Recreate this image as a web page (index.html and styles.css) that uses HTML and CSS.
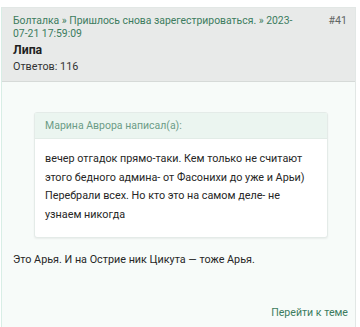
FILE: index.html
```html
<!DOCTYPE html>
<html lang="ru">
<head>
<meta charset="utf-8">
<link rel="stylesheet" href="styles.css">
</head>
<body>
<div class="post">
  <div class="post-head">
    <div class="crumbs">
      <a class="crumb" href="#">Болталка » Пришлось снова зарегестрироваться. » 2023-07-21 17:59:09</a>
      <span class="num">#41</span>
    </div>
    <div class="author">Липа</div>
    <div class="replies">Ответов: 116</div>
  </div>
  <div class="post-body">
    <div class="quote">
      <div class="quote-head">Марина Аврора написал(а):</div>
      <div class="quote-text">вечер отгадок прямо-таки. Кем только не считают этого бедного админа- от Фасонихи до уже и Арьи) Перебрали всех. Но кто это на самом деле- не узнаем никогда</div>
    </div>
    <p class="text">Это Арья. И на Острие ник Цикута — тоже Арья.</p>
    <div class="foot"><a class="goto" href="#">Перейти к теме</a></div>
  </div>
</div>
</body>
</html>
```

FILE: styles.css
```css
html, body {
  margin: 0;
  padding: 0;
  background: #ffffff;
}
body {
  font-family: Roboto, "Noto Sans", sans-serif;
  font-size: 10.8px;
  color: #222;
  padding: 7px 4px 0 1px;
}
.post {
  border: 1px solid #e2e7e5;
  border-left-color: #d8eee6;
}
.post-head {
  background: #e8eae9;
  padding: 7px 8px 6px 11px;
  border-bottom: 1px solid #d6dad8;
}
.crumbs {
  display: flex;
  align-items: flex-start;
  gap: 30px;
}
.crumb {
  flex: 1;
  color: #3c7c5e;
  text-decoration: none;
  font-size: 10.4px;
  line-height: 12.5px;
}
.num {
  color: #5f6663;
  font-size: 10.6px;
  line-height: 12.5px;
}
.author {
  font-weight: bold;
  font-size: 12.3px;
  line-height: 16px;
  margin-top: 2px;
  color: #1f1f1f;
}
.replies {
  line-height: 17px;
  color: #333;
}
.post-body {
  background: #f7fbf9;
  padding: 30px 7px 5px 11px;
}
.quote {
  margin: 0 20px 0 21px;
  background: #fff;
  border: 1px solid #e4ebe8;
  border-radius: 3px;
  box-shadow: 0 1px 2px rgba(0,0,0,0.06);
}
.quote-head {
  background: #ebf5f0;
  color: #6b9c86;
  font-size: 10.5px;
  line-height: 25px;
  padding: 0 10px;
  border-bottom: 1px solid #e2ece7;
}
.quote-text {
  padding: 11px 10px 12px 10px;
  line-height: 18.7px;
  color: #262626;
}
.text {
  margin: 12px 0 0 0;
  line-height: 19px;
  color: #262626;
}
.foot {
  display: flex;
  justify-content: flex-end;
  margin-top: 35px;
}
.goto {
  color: #3c7c5e;
  text-decoration: none;
  font-size: 10.6px;
  line-height: 18px;
}
```
